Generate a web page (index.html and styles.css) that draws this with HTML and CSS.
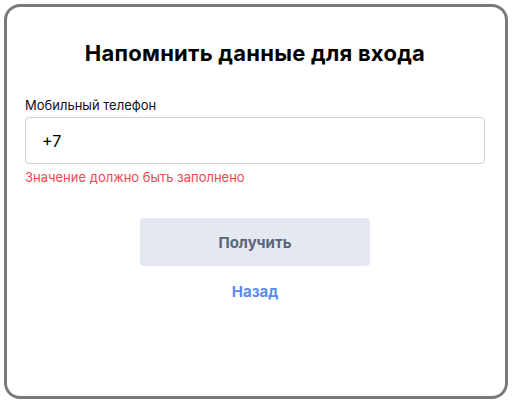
FILE: index.html
```html
<!DOCTYPE html>
<html lang="ru">
<head>
    <meta charset="UTF-8">
    <meta name="viewport" content="width=device-width, initial-scale=1.0">
    <title>Напомнить данные для входа</title>
    <link rel="stylesheet" href="styles.css">
</head>
<body>

    <!-- Remind login modal -->
    <div class="modal">
        <h1 class="modal-title">Напомнить данные для входа</h1>

        <form class="form" onsubmit="return false;">
            <label class="field-label" for="phone">Мобильный телефон</label>
            <input class="field-input" id="phone" type="tel" value="+7">
            <div class="field-error">Значение должно быть заполнено</div>

            <div class="actions">
                <button class="btn-submit" type="submit">Получить</button>
                <a class="link-back" href="#">Назад</a>
            </div>
        </form>
    </div>

</body>
</html>
```

FILE: styles.css
```css
* {
    box-sizing: border-box;
    margin: 0;
    padding: 0;
}

body, html {
    height: 100%;
    background: #fff;
    font-family: 'Inter', 'Noto Sans', sans-serif;
    overflow: hidden;
}

body {
    padding: 4px 7px 3px 4px;
}

.modal {
    height: 395px;
    border: 3px solid #7a7a7a;
    border-radius: 16px;
    padding: 0 20px 0 18px;
    background: #fff;
}

.modal-title {
    font-size: 22px;
    font-weight: 700;
    letter-spacing: 0.25px;
    color: #000;
    text-align: center;
    margin-top: 33px;
    line-height: 26px;
}

.form {
    display: flex;
    flex-direction: column;
    margin-top: 31px;
}

.field-label {
    font-size: 13px;
    line-height: 16px;
    color: #111;
    margin-bottom: 4px;
}

.field-input {
    height: 47px;
    border: 1px solid #c9d0de;
    border-radius: 4px;
    padding: 0 16px;
    font-family: inherit;
    font-size: 16px;
    color: #000;
    outline: none;
}

.field-error {
    font-size: 13px;
    line-height: 16px;
    color: #f2474f;
    margin-top: 5px;
}

.actions {
    display: flex;
    flex-direction: column;
    align-items: center;
    margin-top: 33px;
}

.btn-submit {
    width: 230px;
    height: 48px;
    border: none;
    border-radius: 4px;
    background: #e3e8f1;
    color: #5c6479;
    font-family: inherit;
    font-size: 15px;
    font-weight: 700;
    cursor: pointer;
}

.link-back {
    margin-top: 17px;
    font-size: 15px;
    font-weight: 700;
    line-height: 18px;
    color: #5b8cf2;
    text-decoration: none;
}
```
